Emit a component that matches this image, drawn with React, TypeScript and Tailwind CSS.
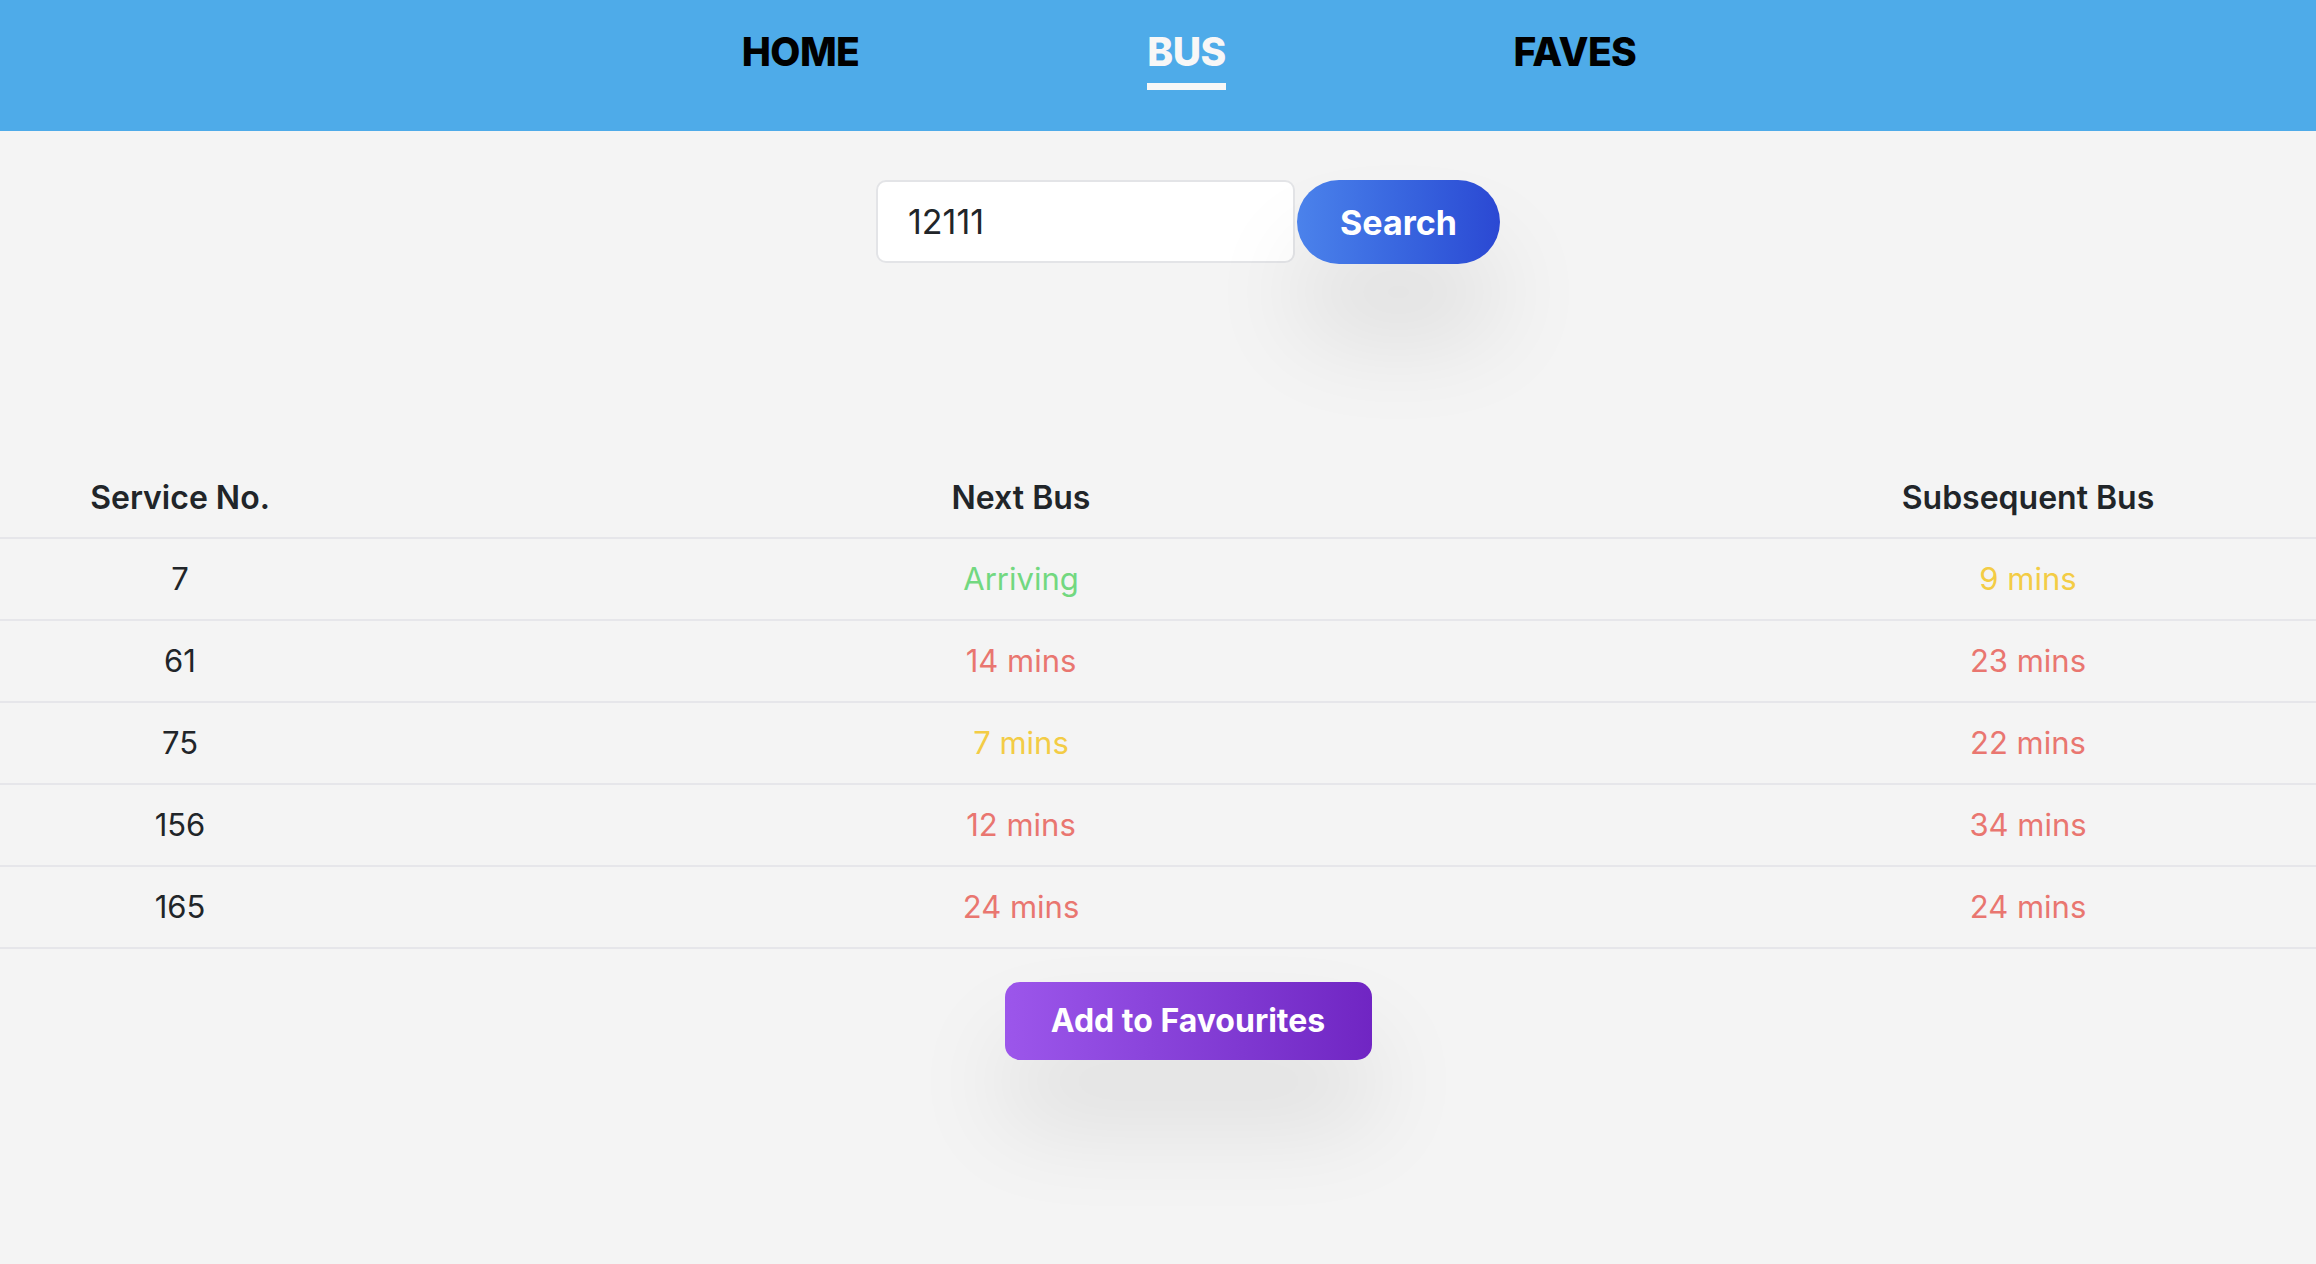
import React from "react";

type Arrival = { label: string; tone: "green" | "red" | "yellow" };

interface Row {
  service: string;
  next: Arrival;
  subsequent: Arrival;
}

const rows: Row[] = [
  { service: "7", next: { label: "Arriving", tone: "green" }, subsequent: { label: "9 mins", tone: "yellow" } },
  { service: "61", next: { label: "14 mins", tone: "red" }, subsequent: { label: "23 mins", tone: "red" } },
  { service: "75", next: { label: "7 mins", tone: "yellow" }, subsequent: { label: "22 mins", tone: "red" } },
  { service: "156", next: { label: "12 mins", tone: "red" }, subsequent: { label: "34 mins", tone: "red" } },
  { service: "165", next: { label: "24 mins", tone: "red" }, subsequent: { label: "24 mins", tone: "red" } },
];

const toneClass: Record<Arrival["tone"], string> = {
  green: "text-[#72d880]",
  red: "text-[#e97670]",
  yellow: "text-[#f3cc45]",
};

function NavItem({ label, active }: { label: string; active?: boolean }) {
  return (
    <div className="flex flex-col items-center">
      <span
        className={`text-[39px] font-extrabold leading-[48px] tracking-[-0.015em] ${
          active ? "text-[#f7f7f7]" : "text-black"
        }`}
      >
        {label}
      </span>
      <span className={`mt-[7px] h-[7px] w-full ${active ? "bg-[#f7f7f7]" : "bg-transparent"}`} />
    </div>
  );
}

export default function App() {
  return (
    <div className="min-h-screen bg-[#f4f4f4] font-['Inter',sans-serif] text-[#212529]">
      {/* Top nav */}
      <header className="flex h-[131px] justify-center bg-[#4eabe9] pl-[62px]">
        <nav className="flex gap-[288px] pt-[28px]">
          <NavItem label="HOME" />
          <NavItem label="BUS" active />
          <NavItem label="FAVES" />
        </nav>
      </header>

      {/* Search */}
      <div className="mt-[49px] flex justify-center gap-[2px] pl-[60px]">
        <input
          defaultValue="12111"
          className="h-[83px] w-[419px] rounded-[10px] border-2 border-[#e3e4e7] bg-white px-[30px] text-[34px] text-[#212529] outline-none"
        />
        <button className="relative h-[84px] w-[203px] rounded-full bg-gradient-to-r from-[#4b82eb] to-[#2b48d3] text-[34px] font-bold text-white shadow-[0_70px_100px_rgba(0,0,0,0.1)]">
          Search
        </button>
      </div>

      {/* Arrivals table */}
      <div className="mt-[195px]">
        <div className="grid h-[80px] grid-cols-[360px_1322px_1fr] items-center border-b-2 border-[#e6e6ea] text-[32px] font-semibold">
          <div className="text-center">Service No.</div>
          <div className="text-center">Next Bus</div>
          <div className="pl-[58px] text-center">Subsequent Bus</div>
        </div>
        {rows.map((r) => (
          <div
            key={r.service}
            className="grid h-[82px] grid-cols-[360px_1322px_1fr] items-center border-b-2 border-[#e6e6ea] text-[31px]"
          >
            <div className="text-center">{r.service}</div>
            <div className={`text-center ${toneClass[r.next.tone]}`}>{r.next.label}</div>
            <div className={`pl-[58px] text-center ${toneClass[r.subsequent.tone]}`}>{r.subsequent.label}</div>
          </div>
        ))}
      </div>

      <div className="mt-[33px] flex justify-center pl-[60px]">
        <button className="h-[78px] w-[367px] rounded-[15px] bg-gradient-to-r from-[#9c56eb] to-[#7025c3] text-[32px] font-bold text-white shadow-[0_60px_100px_rgba(0,0,0,0.1)]">
          Add to Favourites
        </button>
      </div>
    </div>
  );
}
